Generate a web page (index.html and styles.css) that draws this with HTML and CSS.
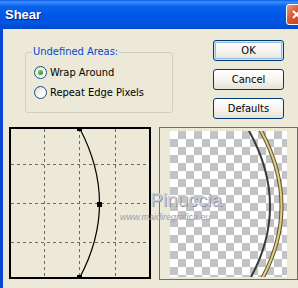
FILE: index.html
```html
<!DOCTYPE html>
<html lang="en">
<head>
    <meta charset="UTF-8">
    <title>Shear</title>
    <link rel="stylesheet" href="styles.css">
</head>
<body>
    <div class="titlebar">
        <span class="title">Shear</span>
        <span class="close">
            <svg width="13" height="13" viewBox="0 0 13 13"><path d="M3 3 L10 10 M10 3 L3 10" stroke="#fff" stroke-width="2"/></svg>
        </span>
    </div>
    <div class="frame">
        <div class="top-row">
            <fieldset class="group">
                <legend>Undefined Areas:</legend>
                <label class="radio-row"><span class="radio checked"></span>Wrap Around</label>
                <label class="radio-row"><span class="radio"></span>Repeat Edge Pixels</label>
            </fieldset>
            <div class="buttons">
                <button class="btn default">OK</button>
                <button class="btn">Cancel</button>
                <button class="btn">Defaults</button>
            </div>
        </div>
        <div class="bottom-row">
            <div class="graph">
                <svg width="142" height="152" viewBox="0 0 142 152">
                    <!-- grid -->
                    <g stroke="#6b6b6b" stroke-width="1" stroke-dasharray="3 3">
                        <line x1="35.5" y1="2" x2="35.5" y2="150"/>
                        <line x1="70.5" y1="2" x2="70.5" y2="150"/>
                        <line x1="106.5" y1="2" x2="106.5" y2="150"/>
                        <line x1="2" y1="37.5" x2="140" y2="37.5"/>
                        <line x1="2" y1="76.5" x2="140" y2="76.5"/>
                        <line x1="2" y1="115.5" x2="140" y2="115.5"/>
                    </g>
                    <rect x="1" y="1" width="140" height="150" fill="none" stroke="#000" stroke-width="2"/>
                    <path d="M70.5 1 Q110.5 76.5 70.5 151" fill="none" stroke="#000" stroke-width="1.2"/>
                    <rect x="68" y="0" width="5" height="4" fill="#000"/>
                    <rect x="88" y="75" width="5" height="5" fill="#000"/>
                    <rect x="68" y="148" width="5" height="4" fill="#000"/>
                </svg>
            </div>
            <div class="preview">
                <div class="image">
                    <svg width="117" height="146" viewBox="0 0 117 146">
                        <path d="M78 -2 Q121 74 80 148" fill="none" stroke="#3a3a3a" stroke-width="2"/>
                        <path d="M90 -2 Q132 74 92 148" fill="none" stroke="#5c5232" stroke-width="4"/>
                        <path d="M90 -2 Q132 74 92 148" fill="none" stroke="#e2cf86" stroke-width="2"/>
                    </svg>
                </div>
            </div>
        </div>
    </div>
    <span class="mark-name">Pinuccia</span>
    <span class="mark-url">www.maidiregrafica.eu</span>
</body>
</html>
```

FILE: styles.css
```css
* {
    box-sizing: border-box;
    margin: 0;
    padding: 0;
}

body {
    width: 298px;
    height: 288px;
    overflow: hidden;
    position: relative;
    background-color: #ece9d8;
    font-family: "DejaVu Sans Condensed", "DejaVu Sans", sans-serif;
    font-stretch: condensed;
    font-size: 11px;
    color: #000;
}

.titlebar {
    height: 29px;
    display: flex;
    align-items: center;
    padding-left: 5px;
    background: linear-gradient(#0a5ae8 0, #3d8ffb 2px, #0a63ec 6px, #0058e6 14px, #0054e0 24px, #0047c9 29px);
}

.title {
    flex: 1;
    color: #fff;
    font: bold 13px "Liberation Sans", Arial, sans-serif;
    text-shadow: 1px 1px #10207a;
}

.close {
    width: 21px;
    height: 21px;
    margin-right: -9px;
    border: 1px solid #fff;
    border-radius: 3px;
    background: linear-gradient(135deg, #e99a80, #d4552f 45%, #c23c16);
    display: flex;
    align-items: center;
    justify-content: center;
}

.frame {
    height: 259px;
    border-left: 3px solid #0b47d6;
}

.top-row {
    display: flex;
    align-items: flex-start;
}

.group {
    margin: 17px 0 0 22px;
    width: 148px;
    height: 67px;
    border: 1px solid #d0d0bf;
    border-radius: 3px;
    padding: 0 6px;
    min-width: 0;
}

.group legend {
    color: #0046d5;
    padding: 0 1px;
    line-height: 12px;
}

.radio-row {
    display: flex;
    align-items: center;
    gap: 3px;
    height: 20px;
    margin-left: 2px;
}

.radio-row:first-of-type {
    margin-top: 4px;
}

.radio {
    width: 13px;
    height: 13px;
    border: 1px solid #1c5180;
    border-radius: 50%;
    background: linear-gradient(135deg, #dcd9cd, #fff 70%);
    display: flex;
    align-items: center;
    justify-content: center;
}

.radio.checked::after {
    content: "";
    width: 5px;
    height: 5px;
    border-radius: 50%;
    background: radial-gradient(circle at 35% 35%, #6fd46f, #21a121 70%);
}

.buttons {
    margin: 11px 0 0 40px;
    display: flex;
    flex-direction: column;
    gap: 8px;
}

.btn {
    width: 71px;
    height: 21px;
    border: 1px solid #003c74;
    border-radius: 3px;
    background: linear-gradient(#fff, #f4f3ee 55%, #e5e2d6);
    font: inherit;
    color: #000;
}

.btn.default {
    box-shadow: inset 0 0 0 1px #cee7ff, inset 0 0 0 2px #98b8ea;
}

.bottom-row {
    display: flex;
    align-items: flex-start;
    margin-top: 8px;
}

.graph {
    margin-left: 6px;
    width: 142px;
    height: 152px;
}

.graph svg,
.image svg {
    display: block;
}

.preview {
    margin-left: 8px;
    width: 139px;
    height: 153px;
    border: 1px solid #716f64;
    display: flex;
    align-items: center;
    justify-content: center;
}

.image {
    width: 117px;
    height: 146px;
    background-color: #fff;
    background-image: conic-gradient(#c3c3c3 25%, #fff 0 50%, #c3c3c3 0 75%, #fff 0);
    background-size: 16px 16px;
}

/* watermark sits on top of the dialog */
.mark-name {
    position: absolute;
    left: 150px;
    top: 189px;
    font: 19px "Liberation Sans", Arial, sans-serif;
    color: #c9ccd6;
    text-shadow: 1px 1px 0 #8f94a4;
}

.mark-url {
    position: absolute;
    left: 120px;
    top: 212px;
    font: italic 9px "Liberation Sans", Arial, sans-serif;
    color: #9a9eae;
}
```
